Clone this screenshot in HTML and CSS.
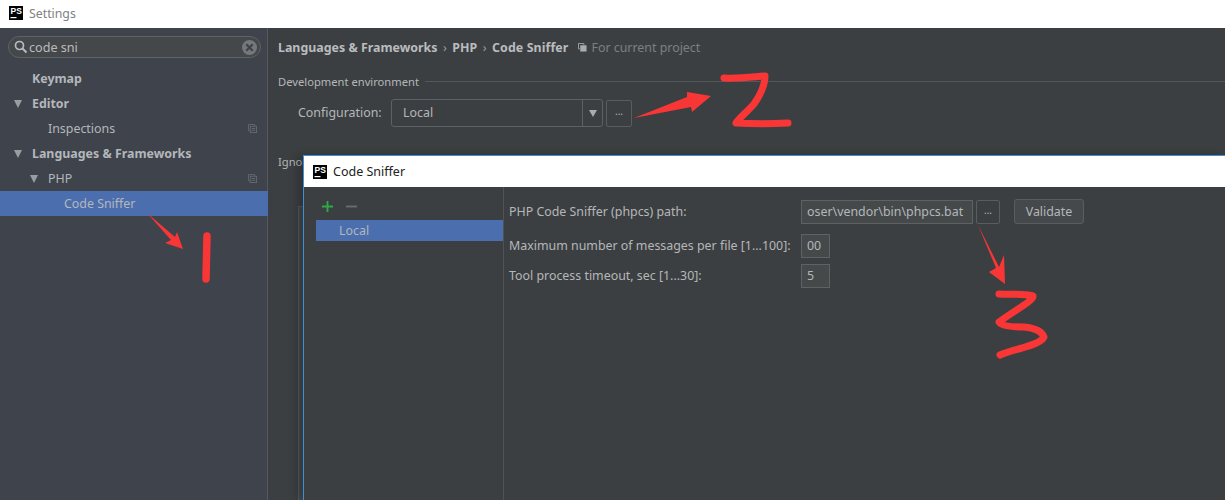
FILE: index.html
```html
<!DOCTYPE html>
<html lang="en">
  <head>
    <meta charset="UTF-8" />
    <title>Settings</title>
    <link rel="stylesheet" href="styles.css">
  </head>
  <body>
    <div class="titlebar">
      <svg class="ps-logo" viewBox="0 0 14 14"><rect width="14" height="14" fill="#000"/><text x="1.5" y="8.4" class="ps-text">PS</text><rect x="1.5" y="11" width="6" height="1.2" fill="#fff"/></svg>
      <span class="title">Settings</span>
    </div>

    <div class="window">
      <aside class="sidebar">
        <div class="search">
          <svg class="search-icon" viewBox="0 0 14 14"><circle cx="5.5" cy="5.5" r="4" fill="none" stroke="#b8bcbf" stroke-width="1.7"/><path d="M8.5 8.5l4 4" stroke="#b8bcbf" stroke-width="2"/></svg>
          <span class="search-text">code sni</span>
          <svg class="search-clear" viewBox="0 0 14 14"><circle cx="7" cy="7" r="7" fill="#75787b"/><path d="M4 4l6 6M10 4l-6 6" stroke="#3e4249" stroke-width="2"/></svg>
        </div>
        <ul class="tree">
          <li class="row lvl0 bold">Keymap</li>
          <li class="row lvl0 bold"><i class="arrow"></i>Editor</li>
          <li class="row lvl1">Inspections<svg class="copy" viewBox="0 0 10 10"><path d="M.5.5h7v1.5M.5.5v7H2" fill="none" stroke="#666a6e"/><rect x="2.5" y="2.5" width="7" height="7" fill="none" stroke="#666a6e"/><path d="M4 5h4M4 7h4" stroke="#666a6e"/></svg></li>
          <li class="row lvl0 bold"><i class="arrow"></i>Languages &amp; Frameworks</li>
          <li class="row lvl1"><i class="arrow"></i>PHP<svg class="copy" viewBox="0 0 10 10"><path d="M.5.5h7v1.5M.5.5v7H2" fill="none" stroke="#666a6e"/><rect x="2.5" y="2.5" width="7" height="7" fill="none" stroke="#666a6e"/><path d="M4 5h4M4 7h4" stroke="#666a6e"/></svg></li>
          <li class="row lvl2 selected">Code Sniffer</li>
        </ul>
      </aside>

      <main class="content">
        <div class="crumbs">
          <b>Languages &amp; Frameworks</b><span class="sep">›</span><b>PHP</b><span class="sep">›</span><b>Code Sniffer</b>
          <svg class="crumb-icon" viewBox="0 0 10 10"><path d="M.5.5h6v1.5M.5.5v6H2" fill="none" stroke="#a9adb0"/><rect x="2.5" y="2.5" width="7" height="7" fill="#a9adb0"/></svg>
          <span class="project">For current project</span>
        </div>
        <div class="group-title"><span>Development environment</span><i class="line"></i></div>
        <div class="config">
          <label class="config-label">Configuration:</label>
          <div class="select">
            <span class="select-value">Local</span>
            <span class="select-btn"><i class="select-arrow"></i></span>
          </div>
          <button class="dots">...</button>
        </div>
        <div class="ignore">Ignore</div>
        <div class="ignore-table"></div>
      </main>
    </div>

    <section class="dialog">
      <div class="dialog-title">
        <svg class="ps-logo" viewBox="0 0 14 14"><rect width="14" height="14" fill="#000"/><text x="1.5" y="8.4" class="ps-text">PS</text><rect x="1.5" y="11" width="6" height="1.2" fill="#fff"/></svg>
        <span>Code Sniffer</span>
      </div>
      <div class="dialog-body">
        <div class="list-pane">
          <div class="toolbar">
            <svg class="tool" viewBox="0 0 14 14"><path d="M7 1v12M1 7h12" stroke="#2fa84a" stroke-width="2"/></svg>
            <svg class="tool" viewBox="0 0 14 14"><path d="M1 7h12" stroke="#6a6d70" stroke-width="2"/></svg>
          </div>
          <div class="list-item">Local</div>
        </div>
        <div class="form">
          <div class="form-row first">
            <span class="form-label">PHP Code Sniffer (phpcs) path:</span>
            <span class="field path">oser\vendor\bin\phpcs.bat</span>
            <button class="dots small">...</button>
            <button class="validate">Validate</button>
          </div>
          <div class="form-row">
            <span class="form-label">Maximum number of messages per file [1...100]:</span>
            <span class="field short">00</span>
          </div>
          <div class="form-row">
            <span class="form-label">Tool process timeout, sec [1...30]:</span>
            <span class="field short">5</span>
          </div>
        </div>
      </div>
    </section>

    <!-- red marks drawn on top of the screenshot -->
    <svg class="marks" viewBox="0 0 1225 500">
      <g fill="#f93636">
        <path d="M147 213L175 237L177 232L183 249L165 243L171 240Z"/>
        <path d="M634 118L687 97L687 92L711 96L692 112L691 107Z"/>
        <path d="M978 225L999 267L1004 255L1005 284L989 272L996 268Z"/>
      </g>
      <g fill="none" stroke="#f93636" stroke-linecap="round" stroke-linejoin="round">
        <path stroke-width="7.5" d="M207 236L206 279"/>
        <path stroke-width="7" d="M724 78C738 79 752 77 765 76C765 84 761 94 754 104C748 111 740 117 736 123C752 124 772 124 788 123"/>
        <path stroke-width="7" d="M999 294C1010 295 1022 293 1033 296C1035 300 1012 312 999 322C1001 326 1012 327 1024 327C1034 328 1042 331 1044 337C1042 342 1032 345 1022 348C1014 350 1006 352 1000 355"/>
      </g>
    </svg>
  </body>
</html>
```

FILE: styles.css
```css
* {
  margin: 0;
  padding: 0;
  box-sizing: border-box;
}

html,
body {
  height: 500px;
  overflow: hidden;
}

body {
  position: relative;
  font-family: "Noto Sans", sans-serif;
  font-size: 12.4px;
  color: #b4b7ba;
  background: #3c3f41;
}

.ps-logo {
  width: 14px;
  height: 14px;
  flex: none;
}

.ps-text {
  font-family: "Liberation Sans", sans-serif;
  font-size: 8.5px;
  font-weight: bold;
  fill: #fff;
}

.titlebar {
  height: 28px;
  background: #fff;
  display: flex;
  align-items: center;
  gap: 6px;
  padding: 0 0 2px 9px;
}

.title {
  color: #7f8184;
  font-size: 12.3px;
}

.window {
  display: flex;
  height: 472px;
  overflow: hidden;
}

/* left tree */
.sidebar {
  width: 268px;
  flex: none;
  background: #3e434c;
  border-right: 1px solid #55585c;
  padding-top: 8px;
}

.search {
  margin: 0 6px 0 8px;
  width: 253px;
  height: 22px;
  border: 1px solid #5f6366;
  border-radius: 11px;
  background: #45484a;
  display: flex;
  align-items: center;
  padding: 0 3px 0 5px;
}

.search-icon {
  width: 14px;
  height: 14px;
  margin-right: 1px;
}

.search-text {
  flex: 1;
  color: #b9bcbe;
  font-size: 12.6px;
}

.search-clear {
  width: 15px;
  height: 15px;
}

.tree {
  list-style: none;
  margin-top: 8px;
}

.row {
  position: relative;
  height: 25px;
  line-height: 25px;
}

.lvl0 {
  padding-left: 32px;
}

.lvl1 {
  padding-left: 48px;
}

.lvl2 {
  padding-left: 64px;
}

.bold {
  font-weight: bold;
}

.selected {
  background: #4b6eaf;
  margin-right: -1px;
}

.arrow {
  position: absolute;
  top: 9px;
  width: 0;
  height: 0;
  border-left: 4.5px solid transparent;
  border-right: 4.5px solid transparent;
  border-top: 8px solid #9a9da0;
  margin-left: -18px;
}

.copy {
  position: absolute;
  right: 10px;
  top: 8px;
  width: 9px;
  height: 9px;
}

/* right side */
.content {
  flex: 1;
  padding: 8px 0 0 10px;
}

.crumbs {
  display: flex;
  align-items: center;
  height: 22px;
}

.crumbs b {
  color: #b9bcbf;
}

.crumbs b:last-of-type {
  letter-spacing: 0.1px;
}

.sep {
  margin: 0 5.5px;
  color: #9a9da0;
}

.crumb-icon {
  width: 9px;
  height: 9px;
  margin: 0 4px 0 10px;
}

.project {
  color: #7c7f82;
}

.group-title {
  display: flex;
  align-items: center;
  gap: 6px;
  margin-top: 12px;
  height: 22px;
  font-size: 11.2px;
}

.line {
  flex: 1;
  height: 1px;
  background: #53565a;
}

.config {
  display: flex;
  align-items: center;
  margin: 7px 0 0 20px;
}

.config-label {
  width: 93px;
  padding-bottom: 2px;
}

.select {
  width: 212px;
  height: 28px;
  border: 1px solid #5e6164;
  border-radius: 3px;
  display: flex;
  align-items: center;
  margin-right: 3px;
}

.select-value {
  flex: 1;
  padding: 0 0 2px 11px;
}

.select-btn {
  width: 20px;
  height: 26px;
  border-left: 1px solid #5e6164;
  display: flex;
  align-items: center;
  justify-content: center;
}

.select-arrow {
  width: 0;
  height: 0;
  border-left: 4px solid transparent;
  border-right: 4px solid transparent;
  border-top: 7px solid #a9acaf;
}

.dots {
  width: 26px;
  height: 27px;
  background: transparent;
  border: 1px solid #5a5d60;
  border-radius: 2px;
  color: #b4b7ba;
  font-family: inherit;
  font-size: 10px;
  padding-bottom: 4px;
}

.ignore {
  margin-top: 27px;
  font-size: 11.2px;
}

.ignore-table {
  margin: 37px 0 0 20px;
  height: 300px;
  border: 1px solid #55585a;
  background: #45484a;
}

/* dialog floats over the settings window */
.dialog {
  position: absolute;
  left: 303px;
  right: 0;
  top: 155px;
  bottom: 0;
  display: flex;
  flex-direction: column;
  border: 1px solid #3c8fdc;
  border-width: 1px 0 0 1px;
  background: #3c3f41;
  box-shadow: -6px 0 8px rgba(0, 0, 0, 0.2);
}

.dialog-title {
  height: 31px;
  flex: none;
  background: #fff;
  color: #222;
  display: flex;
  align-items: center;
  gap: 6px;
  padding-left: 9px;
  font-size: 12.5px;
}

.dialog-body {
  display: flex;
  flex: 1;
}

.list-pane {
  width: 200px;
  flex: none;
  border-right: 1px solid #505356;
  padding: 13px 0 0 12px;
}

.toolbar {
  display: flex;
  gap: 11px;
  height: 20px;
  padding-left: 5px;
}

.tool {
  width: 13px;
  height: 13px;
}

.list-item {
  height: 21px;
  line-height: 21px;
  background: #4b6eaf;
  padding-left: 23px;
  color: #b4b7ba;
}

.form {
  flex: 1;
  padding: 12px 0 0 5px;
}

.form-row {
  display: flex;
  align-items: center;
  height: 25px;
  margin-bottom: 5px;
}

.form-row.first {
  margin-bottom: 9px;
}

.form-label {
  width: 292px;
  white-space: nowrap;
}

.field {
  height: 24px;
  line-height: 22px;
  border: 1px solid #5f6264;
  background: #45494a;
  padding-left: 5px;
}

.field.path {
  width: 172px;
  margin-right: 3px;
  white-space: nowrap;
  overflow: hidden;
}

.field.short {
  width: 29px;
}

.dots.small {
  width: 24px;
  height: 24px;
  margin-right: 14px;
}

.validate {
  width: 70px;
  height: 25px;
  background: #45494b;
  border: 1px solid #5a5d60;
  border-radius: 3px;
  color: #b4b7ba;
  font-family: inherit;
  font-size: 12.4px;
}

.marks {
  position: absolute;
  left: 0;
  top: 0;
  width: 1225px;
  height: 500px;
  pointer-events: none;
}
```
